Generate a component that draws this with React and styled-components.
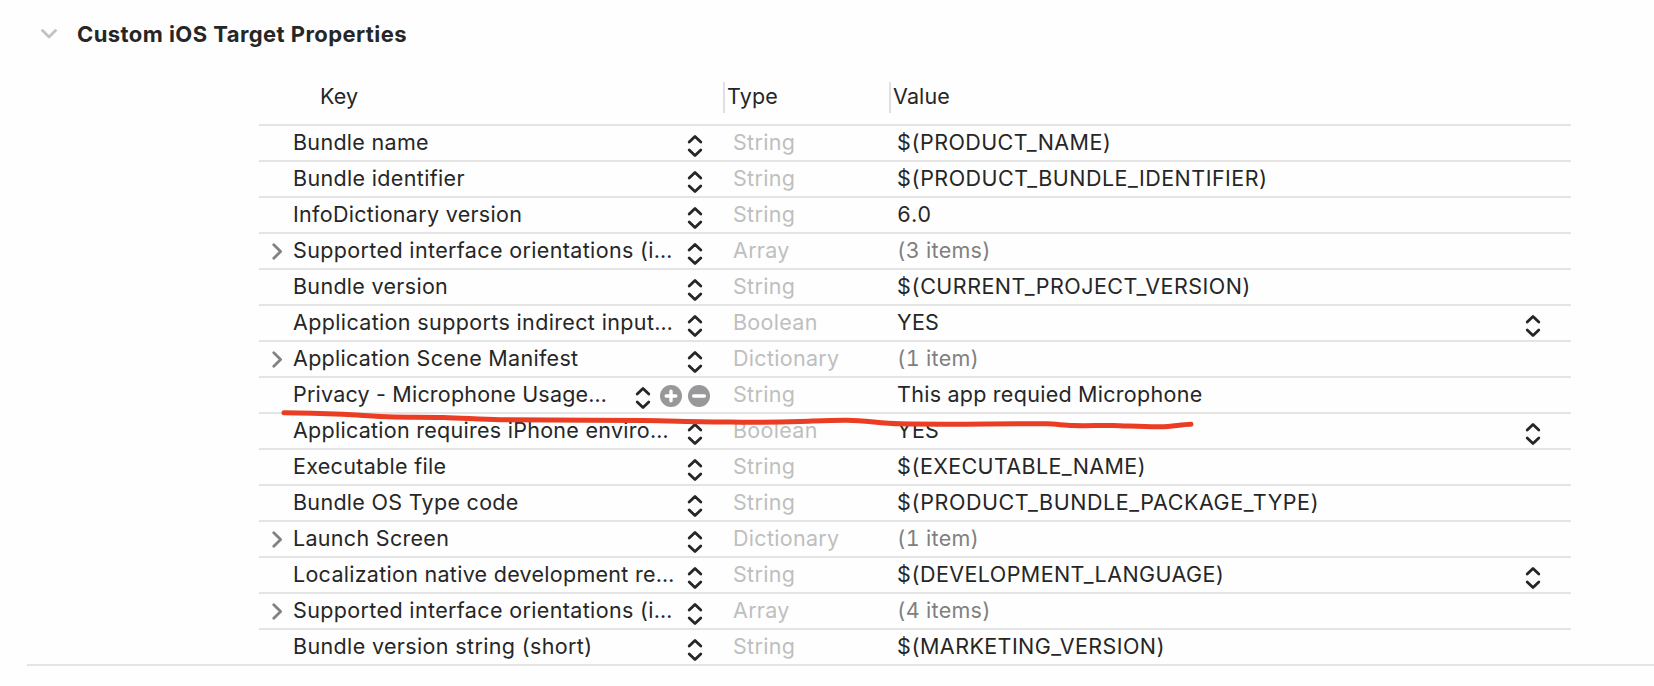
import React from "react";
import styled, { createGlobalStyle } from "styled-components";

const GlobalStyle = createGlobalStyle`
  * { box-sizing: border-box; }
  body {
    margin: 0;
    background: #fefefe;
    color: #262626;
    font-family: Inter, "Liberation Sans", sans-serif;
    font-size: 21.5px;
    overflow: hidden;
  }
`;

const Section = styled.section`
  position: relative;
  height: 686px;
  padding-left: 27px;
`;

const SectionHeader = styled.header`
  display: flex;
  align-items: center;
  height: 72px;
  padding: 0 0 4px 14px;
`;

const Title = styled.h2`
  margin: 0 0 0 20px;
  font-size: 22px;
  line-height: 28px;
  font-weight: 700;
  letter-spacing: 0.43px;
`;

const TableArea = styled.div`
  border-bottom: 2px solid #e4e4e4;
  padding-left: 232px;
`;

const Table = styled.div`
  width: 1312px;
`;

const HeaderRow = styled.div`
  display: grid;
  grid-template-columns: 464px 166px 1fr;
  height: 54px;
  padding-top: 10px;
  border-bottom: 2px solid #e4e4e4;
`;

const HeaderCell = styled.div`
  height: 31px;
  line-height: 29px;
  white-space: nowrap;
  letter-spacing: 0.15px;
  padding-left: ${(p) => (p.$first ? 61 : 2)}px;
  border-left: ${(p) => (p.$first ? "none" : "2px solid #e0e0e0")};
`;

const Row = styled.div`
  display: grid;
  grid-template-columns: 474px 164px 1fr;
  height: 36px;
  border-bottom: 2px solid #e4e4e4;
  &:last-child {
    height: 34px;
    border-bottom: none;
  }
`;

const Cell = styled.div`
  display: flex;
  align-items: flex-start;
  min-width: 0;
`;

const Disclosure = styled.span`
  display: flex;
  width: 34px;
  padding: 9px 0 0 13px;
`;

const Label = styled.span`
  flex: 1;
  line-height: 32px;
  white-space: nowrap;
  letter-spacing: ${(p) => p.$track ?? 0.3}px;
  color: ${(p) => p.$color ?? "#262626"};
`;

const ValueLabel = styled(Label)`
  font-variant-numeric: tabular-nums;
`;

const Controls = styled.span`
  display: flex;
  gap: 6px;
  padding: 7px ${(p) => p.$end}px 0 0;
`;

const StepperIcon = styled.svg`
  width: 16px;
  height: 24px;
  margin: 1px ${(p) => (p.$spaced ? 3 : 0)}px 0 0;
`;

const RoundIcon = styled.svg`
  width: 22px;
  height: 22px;
`;

const Scribble = styled.svg`
  position: absolute;
  left: 275px;
  top: 400px;
  width: 930px;
  height: 40px;
  pointer-events: none;
`;

const Stepper = ({ spaced }) => (
  <StepperIcon $spaced={spaced} viewBox="0 0 16 24" fill="none" stroke="#262626" strokeWidth="2.8" strokeLinecap="round" strokeLinejoin="round">
    <path d="M2.2 8 8 2.4 13.8 8M2.2 16 8 21.6 13.8 16" />
  </StepperIcon>
);

const RoundButton = ({ plus }) => (
  <RoundIcon viewBox="0 0 22 22" stroke="#fefefe" strokeWidth="3.4" strokeLinecap="round">
    <circle cx="11" cy="11" r="11" fill="#98989a" stroke="none" />
    <path d={plus ? "M6.2 11H15.8M11 6.2V15.8" : "M5.6 11H16.4"} />
  </RoundIcon>
);

const rows = [
  { key: "Bundle name", type: "String", value: "$(PRODUCT_NAME)", valueTrack: 0.41 },
  { key: "Bundle identifier", keyTrack: 0.34, type: "String", value: "$(PRODUCT_BUNDLE_IDENTIFIER)", valueTrack: 0.47 },
  { key: "InfoDictionary version", type: "String", value: "6.0" },
  { key: "Supported interface orientations (i…", keyTrack: 0.36, type: "Array", value: "(3 items)", group: true },
  { key: "Bundle version", type: "String", value: "$(CURRENT_PROJECT_VERSION)", valueTrack: 0.48 },
  { key: "Application supports indirect input…", keyTrack: 0.36, type: "Boolean", value: "YES", choice: true },
  { key: "Application Scene Manifest", type: "Dictionary", value: "(1 item)", group: true },
  { key: "Privacy - Microphone Usage…", keyTrack: 0.2, type: "String", value: "This app requied Microphone", active: true },
  { key: "Application requires iPhone enviro…", keyTrack: 0.27, type: "Boolean", value: "YES", choice: true },
  { key: "Executable file", type: "String", value: "$(EXECUTABLE_NAME)", valueTrack: 0.36 },
  { key: "Bundle OS Type code", type: "String", value: "$(PRODUCT_BUNDLE_PACKAGE_TYPE)", valueTrack: 0.55 },
  { key: "Launch Screen", type: "Dictionary", value: "(1 item)", group: true },
  { key: "Localization native development re…", keyTrack: 0.28, type: "String", value: "$(DEVELOPMENT_LANGUAGE)", valueTrack: 0.41, choice: true },
  { key: "Supported interface orientations (i…", keyTrack: 0.36, type: "Array", value: "(4 items)", group: true },
  { key: "Bundle version string (short)", keyTrack: 0.36, type: "String", value: "$(MARKETING_VERSION)", valueTrack: 0.42 },
];

const PropertyRow = ({ item }) => (
  <Row>
    <Cell>
      <Disclosure>
        {item.group && (
          <svg width="11" height="17" viewBox="0 0 11 17" fill="none" stroke="#828282" strokeWidth="2.8" strokeLinecap="round" strokeLinejoin="round">
            <path d="M1.8 1.8 8.6 8.5 1.8 15.2" />
          </svg>
        )}
      </Disclosure>
      <Label $track={item.keyTrack}>{item.key}</Label>
      <Controls $end={item.active ? 23 : 30}>
        <Stepper spaced={item.active} />
        {item.active && <RoundButton plus />}
        {item.active && <RoundButton />}
      </Controls>
    </Cell>
    <Cell>
      <Label $color="#bfbfbf">{item.type}</Label>
    </Cell>
    <Cell>
      <ValueLabel $track={item.valueTrack} $color={item.group ? "#808080" : undefined}>{item.value}</ValueLabel>
      {item.choice && (
        <Controls $end={30}>
          <Stepper />
        </Controls>
      )}
    </Cell>
  </Row>
);

export default function App() {
  return (
    <Section>
      <GlobalStyle />
      <SectionHeader>
        <svg width="16" height="10" viewBox="0 0 16 10" fill="none" stroke="#c2c2c2" strokeWidth="2.8" strokeLinecap="round" strokeLinejoin="round">
          <path d="M1.5 1.5 8 8 14.5 1.5" />
        </svg>
        <Title>Custom iOS Target Properties</Title>
      </SectionHeader>
      <TableArea>
        <Table>
          <HeaderRow>
            <HeaderCell $first>Key</HeaderCell>
            <HeaderCell>Type</HeaderCell>
            <HeaderCell>Value</HeaderCell>
          </HeaderRow>
          {rows.map((item, i) => (
            <PropertyRow key={i} item={item} />
          ))}
        </Table>
      </TableArea>
      <Scribble viewBox="275 400 930 40" fill="none" stroke="#ea3d24" strokeWidth="5" strokeLinecap="round" strokeLinejoin="round">
        <path d="M284 412.7C305 412.7 323 413.3 343 414.3C360 415 375 416.8 393 417C410 417.3 426 417 443 417.5C463 418 480 419.5 500 419.8C550 420.3 595 420 643 420.5C675 421 700 421.8 730 422C750 422.5 775 422.3 800 421.5C816 421 832 420.2 847 420.3C866 420.3 880 423.5 900 423.8C950 424.8 1000 423.5 1047 423.8C1056 424 1064 425.3 1073 425.5C1087 426 1100 425.3 1113 425.5C1130 426 1145 427 1160 426.8C1173 426.6 1180 424.6 1191 424.3" />
      </Scribble>
    </Section>
  );
}
